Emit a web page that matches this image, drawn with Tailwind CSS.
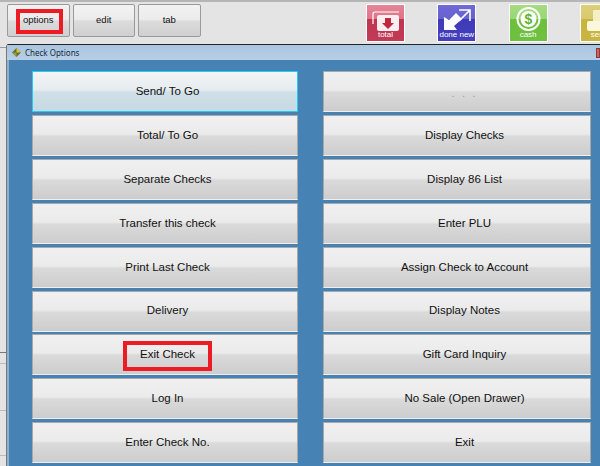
<!DOCTYPE html>
<html lang="en">
<head>
  <meta charset="UTF-8" />
  <title>Check Options</title>
  <script src="https://cdn.jsdelivr.net/npm/@tailwindcss/browser@4"></script>
</head>
<body class="w-[600px] h-[466px] overflow-hidden bg-[#e3e3e3] font-['Liberation_Sans',sans-serif] text-[#111]">

  <!-- top toolbar -->
  <div class="relative flex h-[44px] border-t-2 border-[#b5b5b5] bg-[#e4e4e4]">
    <div class="flex gap-[3px] pl-[7px] pt-[2px]">
      <button class="relative flex h-[33px] w-[62.5px] items-center justify-center rounded-[2px] border border-[#9a9a9a] bg-[linear-gradient(#f2f2f2_0%,#ececec_46%,#dcdcdc_52%,#cfcfcf_100%)] text-[9.5px]">
        options
        <span class="absolute left-[8px] top-[4px] h-[25px] w-[47px] border-[4px] border-[#ed1c24]"></span>
      </button>
      <button class="flex h-[33px] w-[62.5px] items-center justify-center rounded-[2px] border border-[#9a9a9a] bg-[linear-gradient(#f2f2f2_0%,#ececec_46%,#dcdcdc_52%,#cfcfcf_100%)] text-[9.5px]">edit</button>
      <button class="flex h-[33px] w-[62.5px] items-center justify-center rounded-[2px] border border-[#9a9a9a] bg-[linear-gradient(#f2f2f2_0%,#ececec_46%,#dcdcdc_52%,#cfcfcf_100%)] text-[9.5px]">tab</button>
    </div>
    <div class="ml-[165.5px] flex gap-[32.3px] pt-[2px]">
      <!-- total -->
      <div class="relative h-[38px] w-[39px] shrink-0 border border-white bg-[linear-gradient(#e58598_0%,#df7488_38%,#bf3550_39%,#c23a55_100%)]">
        <svg class="absolute left-0 top-0" width="37" height="28" viewBox="0 0 37 28">
          <path d="M6 19V9q0-2 2-2H32" fill="none" stroke="#fff" stroke-width="1.2"/>
          <rect x="10" y="10" width="22" height="16" rx="2" fill="#fbeef0"/>
          <path d="M18 13h6v5h3l-6 6-6-6h3z" fill="#c0283f"/>
        </svg>
        <span class="absolute inset-x-0 bottom-[1px] text-center text-[8px] leading-[10px] text-white">total</span>
      </div>
      <!-- done new -->
      <div class="relative h-[38px] w-[39px] shrink-0 border border-white bg-[linear-gradient(#6f69d6_0%,#6761cf_38%,#3f3bb8_39%,#4440bd_100%)]">
        <svg class="absolute left-0 top-0" width="37" height="28" viewBox="0 0 37 28">
          <path d="M6 12v13h13l-3-4 8-7-6-6-7 7z" fill="#fff"/>
          <path d="M21 5h11v11M31 6L21 16" fill="none" stroke="#fff" stroke-width="1.6"/>
        </svg>
        <span class="absolute inset-x-0 bottom-[1px] whitespace-nowrap text-center text-[8px] leading-[10px] text-white">done new</span>
      </div>
      <!-- cash -->
      <div class="relative h-[38px] w-[39px] shrink-0 border border-white bg-[linear-gradient(#a5dc80_0%,#9ad773_38%,#6cc03c_39%,#6fc040_100%)]">
        <svg class="absolute left-0 top-0" width="37" height="28" viewBox="0 0 37 28">
          <circle cx="18.5" cy="14" r="11" fill="none" stroke="#fff" stroke-width="2"/>
          <circle cx="18.5" cy="14" r="8" fill="#fff"/>
          <text x="18.5" y="19" text-anchor="middle" font-size="14" font-weight="700" fill="#5fb52f" font-family="Liberation Sans">$</text>
        </svg>
        <span class="absolute inset-x-0 bottom-[1px] text-center text-[8px] leading-[10px] text-white">cash</span>
      </div>
      <!-- send, runs off the right edge -->
      <div class="relative h-[38px] w-[39px] shrink-0 border border-white bg-[linear-gradient(#dccf78_0%,#d8ca6e_38%,#c9b43c_39%,#c9b540_100%)]">
        <svg class="absolute left-0 top-0" width="37" height="28" viewBox="0 0 37 28">
          <path d="M12 16V6q0-1 1-1h12q1 0 1 1v10z" fill="#f5efc8"/>
          <rect x="6" y="16" width="26" height="10" rx="2" fill="#fbf7dd"/>
        </svg>
        <span class="absolute inset-x-0 bottom-[1px] text-center text-[8px] leading-[10px] text-white">send</span>
      </div>
    </div>
  </div>

  <div class="flex">
    <!-- strip of the screen behind the dialog -->
    <div class="flex h-[422px] w-[6px] shrink-0 flex-col bg-[#e4e4e4]">
      <div class="mt-[3px] h-[1px] bg-[#9a9a9a]"></div>
      <div class="mt-[304px] h-[1px] bg-[#777]"></div>
      <div class="mt-[10px] h-[1px] bg-[#bbb]"></div>
      <div class="mt-[46px] h-[1px] bg-[#bbb]"></div>
      <div class="mt-[44px] h-[1px] bg-[#bbb]"></div>
    </div>

    <!-- dialog -->
    <div class="h-[422px] flex-1 rounded-tl-[3px] border-l border-t border-l-[#777] border-t-[#222] bg-[#4682b4]">
      <div class="flex h-[15px] items-center justify-between bg-[linear-gradient(#a9c5e0,#b7cfe6)] pl-[4px]">
        <div class="flex items-center gap-[3px]">
          <svg width="11" height="11" viewBox="0 0 11 11">
            <path d="M5.5 1L10 5.5 5.5 10 1 5.5z" fill="#6b6b2a"/>
            <path d="M5.5 1L10 5.5H5.5z" fill="#d6c84a"/>
            <path d="M1 5.5L5.5 10V5.5z" fill="#8fa04a"/>
          </svg>
          <span class="font-['Noto_Sans',sans-serif] text-[8px] leading-none text-[#1a2a3a]">Check Options</span>
        </div>
        <span class="h-[10px] w-[4px] border border-[#8a3a3a] bg-[#d9605a]"></span>
      </div>

      <div class="grid h-[406px] grid-cols-[266px_268px] content-start gap-x-[25px] gap-y-[2.875px] border-l-2 border-l-[#8db0d0] pl-[23px] pt-[11.2px] text-[11.5px]">
        <button class="flex h-[41px] items-center justify-center border border-[#22ccf2] bg-[linear-gradient(#f3f4f5_0%,#e6ecf0_45%,#d0e0e8_52%,#c8d8e2_100%)] pl-[5px]">Send/ To Go</button>
        <button class="flex h-[41px] items-center justify-center border border-[#a8a8a8] border-b-[#eee] bg-[linear-gradient(#f0f0f0_0%,#ebebeb_46%,#dadada_52%,#cdcdcd_100%)] pl-[15px] pt-[4px] tracking-[2px] text-[#999]">. . .</button>
        <button class="flex h-[41px] items-center justify-center border border-[#a8a8a8] border-b-[#eee] bg-[linear-gradient(#f0f0f0_0%,#ebebeb_46%,#dadada_52%,#cdcdcd_100%)] pl-[5px]">Total/ To Go</button>
        <button class="flex h-[41px] items-center justify-center border border-[#a8a8a8] border-b-[#eee] bg-[linear-gradient(#f0f0f0_0%,#ebebeb_46%,#dadada_52%,#cdcdcd_100%)] pl-[15px]">Display Checks</button>
        <button class="flex h-[41px] items-center justify-center border border-[#a8a8a8] border-b-[#eee] bg-[linear-gradient(#f0f0f0_0%,#ebebeb_46%,#dadada_52%,#cdcdcd_100%)] pl-[5px]">Separate Checks</button>
        <button class="flex h-[41px] items-center justify-center border border-[#a8a8a8] border-b-[#eee] bg-[linear-gradient(#f0f0f0_0%,#ebebeb_46%,#dadada_52%,#cdcdcd_100%)] pl-[15px]">Display 86 List</button>
        <button class="flex h-[41px] items-center justify-center border border-[#a8a8a8] border-b-[#eee] bg-[linear-gradient(#f0f0f0_0%,#ebebeb_46%,#dadada_52%,#cdcdcd_100%)] pl-[5px]">Transfer this check</button>
        <button class="flex h-[41px] items-center justify-center border border-[#a8a8a8] border-b-[#eee] bg-[linear-gradient(#f0f0f0_0%,#ebebeb_46%,#dadada_52%,#cdcdcd_100%)] pl-[15px]">Enter PLU</button>
        <button class="flex h-[41px] items-center justify-center border border-[#a8a8a8] border-b-[#eee] bg-[linear-gradient(#f0f0f0_0%,#ebebeb_46%,#dadada_52%,#cdcdcd_100%)] pl-[5px]">Print Last Check</button>
        <button class="flex h-[41px] items-center justify-center border border-[#a8a8a8] border-b-[#eee] bg-[linear-gradient(#f0f0f0_0%,#ebebeb_46%,#dadada_52%,#cdcdcd_100%)] pl-[15px]">Assign Check to Account</button>
        <button class="flex h-[41px] items-center justify-center border border-[#a8a8a8] border-b-[#eee] bg-[linear-gradient(#f0f0f0_0%,#ebebeb_46%,#dadada_52%,#cdcdcd_100%)] pl-[5px]">Delivery</button>
        <button class="flex h-[41px] items-center justify-center border border-[#a8a8a8] border-b-[#eee] bg-[linear-gradient(#f0f0f0_0%,#ebebeb_46%,#dadada_52%,#cdcdcd_100%)] pl-[15px]">Display Notes</button>
        <button class="relative flex h-[41px] items-center justify-center border border-[#a8a8a8] border-b-[#eee] bg-[linear-gradient(#f0f0f0_0%,#ebebeb_46%,#dadada_52%,#cdcdcd_100%)] pl-[5px]">
          Exit Check
          <span class="absolute left-[90px] top-[6px] h-[30px] w-[89px] border-[4px] border-[#ed1c24]"></span>
        </button>
        <button class="flex h-[41px] items-center justify-center border border-[#a8a8a8] border-b-[#eee] bg-[linear-gradient(#f0f0f0_0%,#ebebeb_46%,#dadada_52%,#cdcdcd_100%)] pl-[15px]">Gift Card Inquiry</button>
        <button class="flex h-[41px] items-center justify-center border border-[#a8a8a8] border-b-[#eee] bg-[linear-gradient(#f0f0f0_0%,#ebebeb_46%,#dadada_52%,#cdcdcd_100%)] pl-[5px]">Log In</button>
        <button class="flex h-[41px] items-center justify-center border border-[#a8a8a8] border-b-[#eee] bg-[linear-gradient(#f0f0f0_0%,#ebebeb_46%,#dadada_52%,#cdcdcd_100%)] pl-[15px]">No Sale (Open Drawer)</button>
        <button class="flex h-[41px] items-center justify-center border border-[#a8a8a8] border-b-[#eee] bg-[linear-gradient(#f0f0f0_0%,#ebebeb_46%,#dadada_52%,#cdcdcd_100%)] pl-[5px]">Enter Check No.</button>
        <button class="flex h-[41px] items-center justify-center border border-[#a8a8a8] border-b-[#eee] bg-[linear-gradient(#f0f0f0_0%,#ebebeb_46%,#dadada_52%,#cdcdcd_100%)] pl-[15px]">Exit</button>
      </div>
    </div>
  </div>
</body>
</html>
